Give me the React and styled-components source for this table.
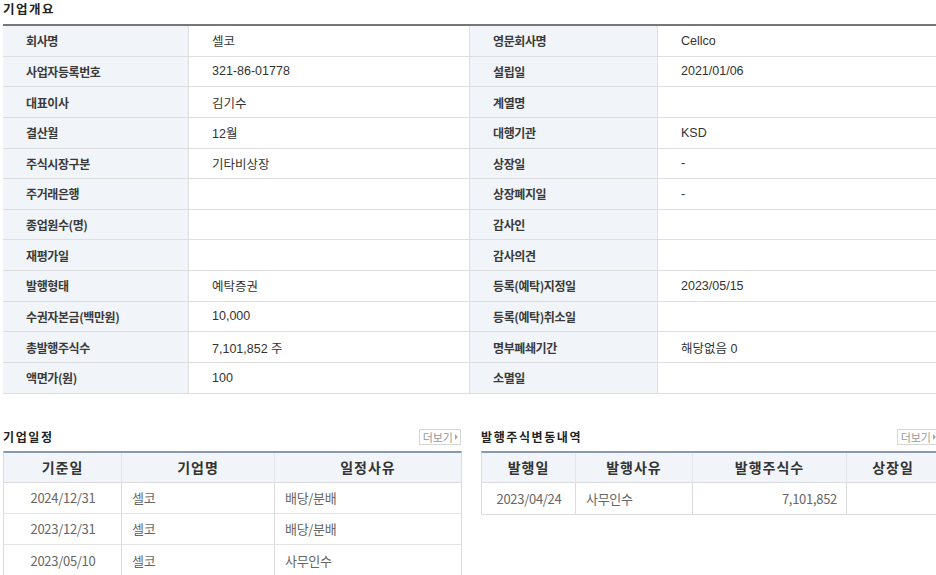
import React from "react";
import styled, { createGlobalStyle } from "styled-components";

const Global = createGlobalStyle`
  html, body { margin: 0; padding: 0; background: #fff; overflow: hidden; }
  body { font-family: "Noto Sans CJK KR", "Noto Sans", sans-serif; color: #333; }
`;

const Page = styled.div`
  width: 937px;
  padding: 1px 0 0 3px;
`;

const SectionTitle = styled.h2`
  margin: 0;
  font-size: 12.5px;
  font-weight: 700;
  line-height: 16px;
  letter-spacing: 1.5px;
  color: #222;
`;

const InfoGrid = styled.div`
  margin-top: 7px;
  display: grid;
  grid-template-columns: 185px 281px 188px 283px;
  border-top: 2px solid #777;
`;

const Cell = styled.div`
  box-sizing: border-box;
  height: 30.64px;
  display: flex;
  align-items: center;
  border-bottom: 1px solid #dedede;
  border-left: ${(p) => (p.$first ? "none" : "1px solid #dedede")};
  padding-left: 23px;
  background: ${(p) => (p.$label ? "#f1f5f9" : "#fff")};
  font-family: ${(p) =>
    p.$label
      ? '"Noto Sans CJK KR", sans-serif'
      : '"Liberation Sans", "Noto Sans CJK KR", sans-serif'};
  font-size: ${(p) => (p.$label ? "12px" : "12.5px")};
  font-weight: ${(p) => (p.$label ? 600 : 400)};
  letter-spacing: ${(p) => (p.$label ? "-0.4px" : "0")};
  color: ${(p) => (p.$label ? "#3a3a3a" : "#333")};
  white-space: nowrap;
`;

const BottomRow = styled.div`
  margin-top: 29px;
  display: flex;
  gap: 19px;
`;

const Panel = styled.div`
  width: 459px;
`;

const PanelHeader = styled.div`
  height: 28px;
  display: flex;
  align-items: center;
  justify-content: space-between;
`;

const PanelTitle = styled.h3`
  margin: 0;
  font-size: 12px;
  font-weight: 700;
  letter-spacing: 1.6px;
  color: #222;
`;

const MoreButton = styled.button`
  box-sizing: border-box;
  height: 16px;
  padding: 0 2px 0 3px;
  margin-right: 1px;
  border: 1px solid #d6d6d6;
  background: #fff;
  font-family: inherit;
  font-size: 11px;
  line-height: 14px;
  color: #999;
  display: flex;
  align-items: center;
  gap: 1px;
  cursor: pointer;
`;

const Arrow = styled.span`
  display: inline-block;
  width: 0;
  height: 0;
  border-left: 3px solid #aaa;
  border-top: 3px solid transparent;
  border-bottom: 3px solid transparent;
  margin-left: 1px;
`;

const Table = styled.div`
  display: grid;
  grid-template-columns: ${(p) => p.$cols};
  border-top: 2px solid #8a97ad;
  border-left: 1px solid #dcdcdc;
  border-right: 1px solid #dcdcdc;
  border-bottom: 1px solid #dcdcdc;
`;

const Th = styled.div`
  box-sizing: border-box;
  height: 30px;
  display: flex;
  align-items: center;
  justify-content: center;
  background: #f1f5f9;
  border-left: ${(p) => (p.$first ? "none" : "1px solid #e2e7ee")};
  border-bottom: 1px solid #dcdcdc;
  font-size: 14px;
  font-weight: 700;
  letter-spacing: 1px;
  color: #333;
`;

const Td = styled.div`
  box-sizing: border-box;
  height: 31px;
  display: flex;
  align-items: center;
  justify-content: ${(p) =>
    p.$align === "center" ? "center" : p.$align === "right" ? "flex-end" : "flex-start"};
  padding: 0 9px 0 10px;
  border-left: ${(p) => (p.$first ? "none" : "1px solid #dcdcdc")};
  border-bottom: ${(p) => (p.$last ? "none" : "1px solid #e4e4e4")};
  font-size: 13px;
  color: #666;
  letter-spacing: -0.3px;
`;

const info = [
  ["회사명", "셀코", "영문회사명", "Cellco"],
  ["사업자등록번호", "321-86-01778", "설립일", "2021/01/06"],
  ["대표이사", "김기수", "계열명", ""],
  ["결산월", "12월", "대행기관", "KSD"],
  ["주식시장구분", "기타비상장", "상장일", "-"],
  ["주거래은행", "", "상장폐지일", "-"],
  ["종업원수(명)", "", "감사인", ""],
  ["재평가일", "", "감사의견", ""],
  ["발행형태", "예탁증권", "등록(예탁)지정일", "2023/05/15"],
  ["수권자본금(백만원)", "10,000", "등록(예탁)취소일", ""],
  ["총발행주식수", "7,101,852 주", "명부폐쇄기간", "해당없음 0"],
  ["액면가(원)", "100", "소멸일", ""],
];

const schedule = [
  ["2024/12/31", "셀코", "배당/분배"],
  ["2023/12/31", "셀코", "배당/분배"],
  ["2023/05/10", "셀코", "사무인수"],
];

const issues = [["2023/04/24", "사무인수", "7,101,852", ""]];

function More() {
  return (
    <MoreButton type="button">
      더보기
      <Arrow />
    </MoreButton>
  );
}

function DataTable({ cols, heads, rows, aligns }) {
  return (
    <Table $cols={cols}>
      {heads.map((h, i) => (
        <Th key={h} $first={i === 0}>
          {h}
        </Th>
      ))}
      {rows.map((r, ri) =>
        r.map((v, ci) => (
          <Td
            key={ri + "-" + ci}
            $first={ci === 0}
            $last={ri === rows.length - 1}
            $align={aligns[ci]}
          >
            {v}
          </Td>
        ))
      )}
    </Table>
  );
}

export default function App() {
  return (
    <Page>
      <Global />
      <SectionTitle>기업개요</SectionTitle>
      <InfoGrid>
        {info.map((row, ri) => (
          <React.Fragment key={ri}>
            <Cell $label $first>
              {row[0]}
            </Cell>
            <Cell>{row[1]}</Cell>
            <Cell $label>{row[2]}</Cell>
            <Cell>{row[3]}</Cell>
          </React.Fragment>
        ))}
      </InfoGrid>
      <BottomRow>
        <Panel>
          <PanelHeader>
            <PanelTitle>기업일정</PanelTitle>
            <More />
          </PanelHeader>
          <DataTable
            cols="117px 153px 1fr"
            heads={["기준일", "기업명", "일정사유"]}
            rows={schedule}
            aligns={["center", "left", "left"]}
          />
        </Panel>
        <Panel>
          <PanelHeader>
            <PanelTitle>발행주식변동내역</PanelTitle>
            <More />
          </PanelHeader>
          <DataTable
            cols="93px 117px 154px 1fr"
            heads={["발행일", "발행사유", "발행주식수", "상장일"]}
            rows={issues}
            aligns={["center", "left", "right", "center"]}
          />
        </Panel>
      </BottomRow>
    </Page>
  );
}
